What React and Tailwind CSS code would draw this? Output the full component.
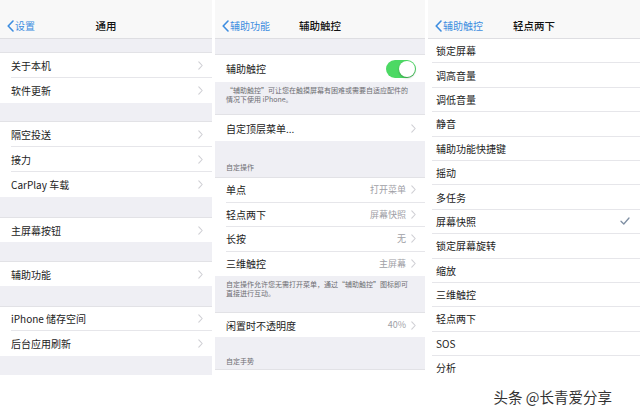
import React from "react";

const FONT = "font-['Noto_Sans_CJK_SC','Noto_Sans',sans-serif]";

function Chevron() {
  return (
    <svg width="5" height="9" viewBox="0 0 5 9" className="shrink-0">
      <path d="M0.8 0.8 L4.2 4.5 L0.8 8.2" fill="none" stroke="#cfcfd4" strokeWidth="1.1" strokeLinecap="round" strokeLinejoin="round" />
    </svg>
  );
}

function BackChevron() {
  return (
    <svg width="7" height="12" viewBox="0 0 7 12" className="shrink-0">
      <path d="M6 1 L1.2 6 L6 11" fill="none" stroke="#3d8de0" strokeWidth="1.6" strokeLinecap="round" strokeLinejoin="round" />
    </svg>
  );
}

function Nav({ back, title }) {
  return (
    <div className="h-[39px] shrink-0 bg-[#f8f8f8] border-b border-[#dedee2] pt-[12px]">
      <div className="grid grid-cols-[1fr_auto_1fr] items-center h-[27px] px-[7px]">
        <div className="flex items-center gap-[1px] text-[10px] text-[#3d8de0]">
          <BackChevron />
          <span>{back}</span>
        </div>
        <div className="text-[10.5px] font-medium text-[#111]">{title}</div>
        <div />
      </div>
    </div>
  );
}

function Row({ label, value, chevron = true, last = false, h = "h-[25px]" }) {
  return (
    <div className={`${h} bg-white pl-[11px] flex shrink-0`}>
      <div className={`flex flex-1 items-center pr-[9px] ${last ? "" : "border-b border-[#e6e6ea]"}`}>
        <span className="flex-1 text-[10px] text-[#222]">{label}</span>
        {value && <span className="text-[9px] text-[#a0a0a6] mr-[5px]">{value}</span>}
        {chevron && <Chevron />}
      </div>
    </div>
  );
}

function Gap({ h }) {
  return <div className={`${h} shrink-0 border-b border-[#e2e2e6]`} />;
}

function Panel1() {
  return (
    <div className="w-[212px] h-[375px] bg-[#efeff4] flex flex-col overflow-hidden">
      <Nav back="设置" title="通用" />
      <Gap h="h-[14px]" />
      <Row label="关于本机" />
      <Row label="软件更新" last />
      <Gap h="h-[19px]" />
      <Row label="隔空投送" />
      <Row label="接力" />
      <Row label="CarPlay 车载" last />
      <Gap h="h-[21px]" />
      <Row label="主屏幕按钮" last h="h-[24px]" />
      <Gap h="h-[20px]" />
      <Row label="辅助功能" last h="h-[24px]" />
      <Gap h="h-[21px]" />
      <Row label="iPhone 储存空间" h="h-[24px]" />
      <Row label="后台应用刷新" last />
    </div>
  );
}

function Toggle() {
  return (
    <div className="w-[30px] h-[18px] rounded-full bg-[#4cd964] relative shrink-0">
      <div className="absolute right-[1px] top-[1px] w-[16px] h-[16px] rounded-full bg-white shadow-[0_1px_2px_rgba(0,0,0,0.3)]" />
    </div>
  );
}

function Footer({ lines, h }) {
  return (
    <div className={`${h} shrink-0 pl-[11px] pr-[8px] pt-[4px] text-[7px] leading-[9px] text-[#6d6d72] border-b border-[#e2e2e6]`}>
      {lines.map((l, i) => (
        <div key={i} className="whitespace-nowrap h-[9px]">{l}</div>
      ))}
    </div>
  );
}

function Panel2() {
  return (
    <div className="w-[210px] h-[375px] bg-[#efeff4] flex flex-col overflow-hidden">
      <Nav back="辅助功能" title="辅助触控" />
      <Gap h="h-[16px]" />
      <div className="h-[27px] bg-white pl-[11px] pr-[9px] flex items-center shrink-0">
        <span className="flex-1 text-[10px] text-[#222]">辅助触控</span>
        <Toggle />
      </div>
      <Footer h="h-[33px]" lines={["“辅助触控”可让您在触摸屏幕有困难或需要自适应配件的", "情况下使用 iPhone。"]} />
      <Row label="自定顶层菜单..." last h="h-[26px]" />
      <div className="h-[37px] shrink-0 flex items-end pl-[11px] pb-[5px] text-[7px] text-[#6d6d72] border-b border-[#e2e2e6]">自定操作</div>
      <Row label="单点" value="打开菜单" h="h-[24.5px]" />
      <Row label="轻点两下" value="屏幕快照" h="h-[24.5px]" />
      <Row label="长按" value="无" h="h-[24.5px]" />
      <Row label="三维触控" value="主屏幕" last h="h-[24.5px]" />
      <Footer h="h-[37px]" lines={["自定操作允许您无需打开菜单，通过“辅助触控”图标即可", "直接进行互动。"]} />
      <Row label="闲置时不透明度" value="40%" last h="h-[24px]" />
      <div className="h-[33px] shrink-0 flex items-end pl-[11px] pb-[3px] text-[7px] text-[#6d6d72] border-b border-[#e2e2e6]">自定手势</div>
      <div className="h-[25px] bg-white shrink-0" />
    </div>
  );
}

function Check() {
  return (
    <svg width="10" height="8" viewBox="0 0 10 8" className="shrink-0">
      <path d="M1 4.2 L3.8 7 L9 1" fill="none" stroke="#7f8fa3" strokeWidth="1.3" strokeLinecap="round" strokeLinejoin="round" />
    </svg>
  );
}

function Panel3() {
  const items = ["锁定屏幕", "调高音量", "调低音量", "静音", "辅助功能快捷键", "摇动", "多任务", "屏幕快照", "锁定屏幕旋转", "缩放", "三维触控", "轻点两下", "SOS", "分析"];
  return (
    <div className="w-[212px] h-[375px] bg-[#f4f4f6] flex flex-col overflow-hidden">
      <Nav back="辅助触控" title="轻点两下" />
      {items.map((t) => (
        <div key={t} className="h-[24.4px] shrink-0 bg-white pl-[4px] flex">
          <div className="flex flex-1 items-center pl-[4px] pr-[10px] border-b border-[#e6e6ea]">
            <span className="flex-1 text-[10px] text-[#222]">{t}</span>
            {t === "屏幕快照" && <Check />}
          </div>
        </div>
      ))}
    </div>
  );
}

export default function App() {
  return (
    <div className={`w-[640px] h-[420px] bg-white overflow-hidden ${FONT}`}>
      <div className="flex gap-[3px]">
        <Panel1 />
        <Panel2 />
        <Panel3 />
      </div>
      <div className="flex justify-end pr-[28px] pt-[12px]">
        <span className="text-[14.5px] leading-[20px] text-[#333]">头条 @长青爱分享</span>
      </div>
    </div>
  );
}
